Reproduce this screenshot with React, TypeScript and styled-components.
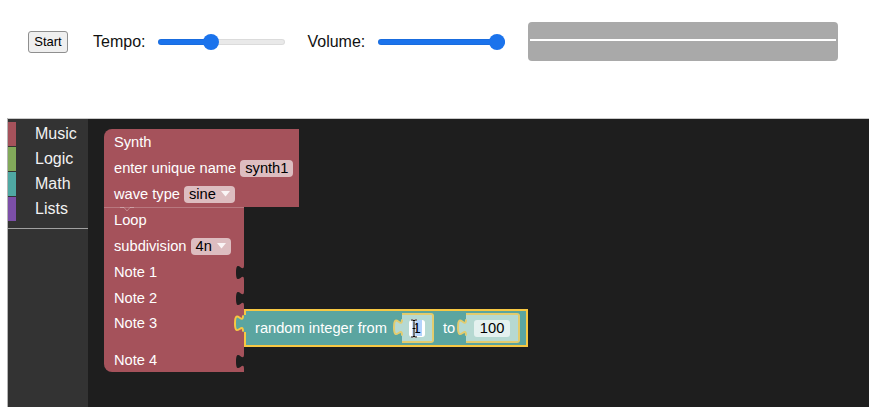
import styled, { createGlobalStyle } from "styled-components";

const GlobalStyle = createGlobalStyle`
  html, body {
    margin: 0;
    padding: 0;
    background: #ffffff;
    overflow: hidden;
  }
  body {
    font-family: "Liberation Sans", Arial, sans-serif;
  }
`;

const Page = styled.div`
  width: 869px;
  height: 407px;
  padding-left: 8px;
  box-sizing: border-box;
  display: flex;
  flex-direction: column;
`;

/* ---------- top controls ---------- */

const Controls = styled.div`
  display: flex;
  align-items: center;
  height: 39px;
  margin-top: 22px;
  padding-left: 20px;
`;

const StartButton = styled.button`
  width: 40px;
  height: 22px;
  padding: 0;
  font-family: "Liberation Sans", Arial, sans-serif;
  font-size: 13px;
  color: #000;
  background: #efefef;
  border: 1px solid #8f8f8f;
  border-radius: 3px;
`;

const Label = styled.span<{ $gap: number }>`
  margin-left: ${(p) => p.$gap}px;
  font-size: 16px;
  color: #111;
`;

const Slider = styled.input<{ $fill: number }>`
  appearance: none;
  -webkit-appearance: none;
  width: 127px;
  height: 16px;
  margin: 0 0 0 13px;
  padding: 0;
  background: transparent;

  &::-webkit-slider-runnable-track {
    height: 6px;
    border-radius: 3px;
    background: linear-gradient(
      to right,
      #1b73ec 0 ${(p) => p.$fill}%,
      #e9e9e9 ${(p) => p.$fill}% 100%
    );
    box-shadow: inset 0 0 0 1px rgba(0, 0, 0, 0.06);
  }

  &::-webkit-slider-thumb {
    -webkit-appearance: none;
    appearance: none;
    width: 16px;
    height: 16px;
    margin-top: -5px;
    border-radius: 50%;
    background: #1b73ec;
    border: none;
  }
`;

const WaveBox = styled.div`
  margin-left: 23px;
  width: 310px;
  height: 39px;
  box-sizing: border-box;
  padding: 0 2px;
  display: flex;
  align-items: center;
  background: #a9a9a9;
  border-radius: 4px;
`;

const WaveLine = styled.div`
  flex: 1;
  height: 2px;
  margin-top: -3px;
  background: #ffffff;
`;

/* ---------- blockly workspace ---------- */

const Workspace = styled.div`
  margin-top: 57px;
  flex: 1;
  display: flex;
  background: #1e1e1e;
  border-top: 1px solid #c9c9c9;
  box-shadow: -1px 0 0 #b4b4b4;
`;

const Toolbox = styled.div`
  width: 80px;
  padding-top: 3px;
  background: #333333;
  display: flex;
  flex-direction: column;
`;

const Category = styled.div`
  display: flex;
  align-items: center;
  height: 24px;
  margin-bottom: 1px;
`;

const Swatch = styled.div<{ $color: string }>`
  width: 8px;
  align-self: stretch;
  background: ${(p) => p.$color};
`;

const CategoryName = styled.span`
  margin-left: 19px;
  font-size: 16px;
  color: #f2f2f2;
`;

const Separator = styled.div`
  margin-top: 6px;
  height: 1px;
  background: #a0a0a0;
`;

const Canvas = styled.div`
  flex: 1;
  position: relative;
  overflow: hidden;
`;

const BlockStack = styled.div`
  position: absolute;
  left: 16px;
  top: 10px;
  display: flex;
  flex-direction: column;
  align-items: flex-start;
`;

const Block = styled.div<{ $width: number; $radius: string }>`
  position: relative;
  width: ${(p) => p.$width}px;
  background: #a5525b;
  border-radius: ${(p) => p.$radius};
`;

const LoopBlock = styled(Block)`
  box-shadow: inset 0 1px 0 rgba(255, 255, 255, 0.22);
`;

const Row = styled.div<{ $height?: number; $top?: boolean }>`
  position: relative;
  display: flex;
  align-items: ${(p) => (p.$top ? "flex-start" : "center")};
  height: ${(p) => p.$height ?? 26}px;
  padding: ${(p) => (p.$top ? "4px" : "0")} 0 0 10px;
  box-sizing: border-box;
  gap: 4px;
`;

const BlockText = styled.span`
  font-size: 11pt;
  line-height: 17px;
  color: #ffffff;
  white-space: nowrap;
`;

const Field = styled.span`
  display: inline-flex;
  align-items: center;
  gap: 5px;
  height: 17px;
  padding: 0 5px;
  border-radius: 4px;
  background: rgba(255, 255, 255, 0.62);
  font-size: 11pt;
  color: #000;
  white-space: nowrap;
`;

const Caret = styled.svg`
  width: 9px;
  height: 6px;
  fill: rgba(255, 255, 255, 0.85);
`;

const NotchCut = styled.svg`
  position: absolute;
  right: 0;
  top: 6px;
  width: 8px;
  height: 15px;
`;

const PrevNotch = styled.svg`
  position: absolute;
  left: 16px;
  top: 0;
  width: 14px;
  height: 5px;
`;

/* random integer block */

const ValueBlock = styled.div`
  position: absolute;
  left: 140px;
  top: -2px;
  width: 284px;
  height: 38px;
  box-sizing: border-box;
  display: flex;
  align-items: center;
  padding: 0 6px 0 9px;
  background: #5ba5a0;
  border: 2px solid #f7c843;
`;

const OutputTab = styled.svg<{ $left: number; $top: number }>`
  position: absolute;
  left: ${(p) => p.$left}px;
  top: ${(p) => p.$top}px;
  width: 12px;
  height: 19px;
  overflow: visible;
`;

const ShadowBlock = styled.div<{ $width: number; $gap: number }>`
  position: relative;
  width: ${(p) => p.$width}px;
  height: 30px;
  margin-left: ${(p) => p.$gap}px;
  box-sizing: border-box;
  display: flex;
  align-items: center;
  justify-content: center;
  background: #b6d9d2;
  border: 2px solid #e3cc6e;
  border-left: none;
  border-radius: 0 3px 3px 0;
`;

const ShadowField = styled.span<{ $editing?: boolean }>`
  position: relative;
  display: inline-flex;
  align-items: center;
  justify-content: center;
  height: 17px;
  padding: 0 ${(p) => (p.$editing ? 3 : 6)}px;
  border-radius: 3px;
  background: ${(p) => (p.$editing ? "#ffffff" : "#e4f1ef")};
  font-size: 11pt;
  color: #000;
`;

const Selected = styled.span`
  padding: 0 1px;
  background: #b3d3fb;
`;

const IBeam = styled.svg`
  position: absolute;
  left: 1px;
  top: -1px;
  width: 8px;
  height: 19px;
`;

const ToText = styled(BlockText)`
  margin-left: 9px;
`;

const notchPath = "M8,0 C8,10 0,-8 0,7.5 C0,23 8,5 8,15 Z";
const beamPath =
  "M1,1 L3,1 L4,2 L5,1 L7,1 M4,2 L4,17 M1,18 L3,18 L4,17 L5,18 L7,18 M2.5,9.5 L5.5,9.5";

function Notch() {
  return (
    <NotchCut viewBox="0 0 8 15">
      <path d={notchPath} fill="#1e1e1e" />
    </NotchCut>
  );
}

function Tab({
  left,
  top,
  fill,
  stroke,
}: {
  left: number;
  top: number;
  fill: string;
  stroke: string;
}) {
  return (
    <OutputTab $left={left} $top={top} viewBox="0 0 12 19">
      <rect x="8.5" y="1" width="3.5" height="17" fill={fill} />
      <path
        d="M9,1.5 C9,11.5 1,-6.5 1,9.5 C1,25 9,7 9,17.5"
        fill={fill}
        stroke={stroke}
        strokeWidth="2"
      />
    </OutputTab>
  );
}

function DropCaret() {
  return (
    <Caret viewBox="0 0 9 6">
      <path d="M0,0 L9,0 L4.5,5.5 Z" />
    </Caret>
  );
}

const categories = [
  { name: "Music", color: "#a5525b" },
  { name: "Logic", color: "#82a95a" },
  { name: "Math", color: "#4fa8a3" },
  { name: "Lists", color: "#7c4fa8" },
];

export default function App() {
  return (
    <>
      <GlobalStyle />
      <Page>
        <Controls>
          <StartButton>Start</StartButton>
          <Label $gap={25}>Tempo:</Label>
          <Slider type="range" defaultValue={40} $fill={41.7} readOnly />
          <Label $gap={22}>Volume:</Label>
          <Slider type="range" defaultValue={100} $fill={100} readOnly />
          <WaveBox>
            <WaveLine />
          </WaveBox>
        </Controls>

        <Workspace>
          <Toolbox>
            {categories.map((c) => (
              <Category key={c.name}>
                <Swatch $color={c.color} />
                <CategoryName>{c.name}</CategoryName>
              </Category>
            ))}
            <Separator />
          </Toolbox>

          <Canvas>
            <BlockStack>
              <Block $width={195} $radius="8px 0 0 0">
                <Row>
                  <BlockText>Synth</BlockText>
                </Row>
                <Row>
                  <BlockText>enter unique name</BlockText>
                  <Field>synth1</Field>
                </Row>
                <Row>
                  <BlockText>wave type</BlockText>
                  <Field>
                    sine
                    <DropCaret />
                  </Field>
                </Row>
              </Block>

              <LoopBlock $width={140} $radius="0 0 0 8px">
                <PrevNotch viewBox="0 0 14 5">
                  <path
                    d="M0,0.5 L4,0.5 L7,4 L10,0.5 L14,0.5"
                    fill="none"
                    stroke="rgba(255,255,255,0.3)"
                    strokeWidth="1"
                  />
                </PrevNotch>
                <Row>
                  <BlockText>Loop</BlockText>
                </Row>
                <Row>
                  <BlockText>subdivision</BlockText>
                  <Field>
                    4n
                    <DropCaret />
                  </Field>
                </Row>
                <Row>
                  <BlockText>Note 1</BlockText>
                  <Notch />
                </Row>
                <Row>
                  <BlockText>Note 2</BlockText>
                  <Notch />
                </Row>
                <Row $height={37} $top>
                  <BlockText>Note 3</BlockText>
                  <ValueBlock>
                    <Tab left={-12} top={3} fill="#5ba5a0" stroke="#f7c843" />
                    <BlockText>random integer from</BlockText>
                    <ShadowBlock $width={32} $gap={15}>
                      <Tab left={-9} top={3} fill="#b6d9d2" stroke="#e3cc6e" />
                      <ShadowField $editing>
                        <Selected>1</Selected>
                        <IBeam viewBox="0 0 8 19">
                          <path d={beamPath} fill="none" stroke="#ffffff" strokeWidth="2.6" />
                          <path d={beamPath} fill="none" stroke="#000000" strokeWidth="1.1" />
                        </IBeam>
                      </ShadowField>
                    </ShadowBlock>
                    <ToText>to</ToText>
                    <ShadowBlock $width={54} $gap={11}>
                      <Tab left={-9} top={3} fill="#b6d9d2" stroke="#e3cc6e" />
                      <ShadowField>100</ShadowField>
                    </ShadowBlock>
                  </ValueBlock>
                </Row>
                <Row $height={24}>
                  <BlockText>Note 4</BlockText>
                  <Notch />
                </Row>
              </LoopBlock>
            </BlockStack>
          </Canvas>
        </Workspace>
      </Page>
    </>
  );
}
